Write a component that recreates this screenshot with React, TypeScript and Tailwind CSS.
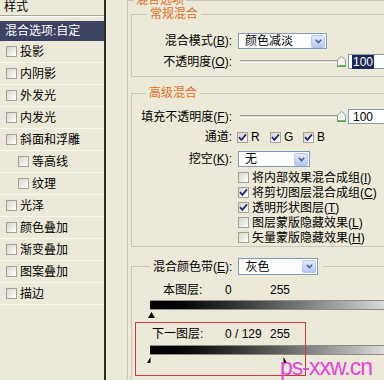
import type { ReactNode } from 'react';

const effects = [
  { name: '投影' },
  { name: '内阴影' },
  { name: '外发光' },
  { name: '内发光' },
  { name: '斜面和浮雕' },
  { name: '等高线', sub: true },
  { name: '纹理', sub: true },
  { name: '光泽' },
  { name: '颜色叠加' },
  { name: '渐变叠加' },
  { name: '图案叠加' },
  { name: '描边' },
];

const options = [
  { label: '将内部效果混合成组', key: 'I', checked: false },
  { label: '将剪切图层混合成组', key: 'C', checked: true },
  { label: '透明形状图层', key: 'T', checked: true },
  { label: '图层蒙版隐藏效果', key: 'L', checked: false },
  { label: '矢量蒙版隐藏效果', key: 'H', checked: false },
];

function Box({ checked = false }: { checked?: boolean }) {
  return (
    <span className="flex h-[11px] w-[11px] shrink-0 items-center justify-center border border-[#a3a199] bg-linear-to-br from-[#d6d5cc] to-white">
      {checked && (
        <svg width="9" height="9" viewBox="0 0 9 9">
          <path d="M1 4.2 3.4 6.8 8 1.4" fill="none" stroke="#1f2d78" strokeWidth="1.8" />
        </svg>
      )}
    </span>
  );
}

function Drop() {
  return (
    <span className="flex h-[13px] w-[14px] items-center justify-center rounded-[2px] border border-[#b6c8ee] bg-linear-to-b from-[#e3ebfd] to-[#b4c8f3]">
      <svg width="7" height="5" viewBox="0 0 7 5">
        <path d="M0.8 0.8 3.5 3.6 6.2 0.8" fill="none" stroke="#4d6185" strokeWidth="1.6" />
      </svg>
    </span>
  );
}

function Select({ value, className }: { value: string; className: string }) {
  return (
    <div className={`flex items-center justify-between border border-[#7f9db9] bg-white pl-[6px] pr-px ${className}`}>
      <span>{value}</span>
      <Drop />
    </div>
  );
}

function Key({ k }: { k: string }) {
  return (
    <>
      (<u>{k}</u>)
    </>
  );
}

function Slider() {
  return (
    <div className="ml-[8px] flex w-[106px] items-center">
      <div className="h-[3px] flex-1 border-y border-t-[#a5a297] border-b-white bg-[#d8d5c8]" />
      <svg width="9" height="11" viewBox="0 0 9 11" className="-ml-px">
        <path d="M0.5 4 4.5 0.5 8.5 4 8.5 10.5 0.5 10.5Z" fill="#f4f4f0" stroke="#8d9a8a" />
        <path d="M0.5 10 8.5 10" stroke="#3aa63a" strokeWidth="1.5" />
      </svg>
    </div>
  );
}

function Row({ label, children }: { label: ReactNode; children: ReactNode }) {
  return (
    <div className="flex items-center">
      <span className="w-[100px] shrink-0 text-right">{label}</span>
      {children}
    </div>
  );
}

function Thumb({ half }: { half?: 'left' | 'right' }) {
  const d = half === 'left' ? 'M3.5 0 3.5 6 0 6Z' : half === 'right' ? 'M3.5 0 7 6 3.5 6Z' : 'M3.5 0 7 6 0 6Z';
  return (
    <svg width="7" height="6" viewBox="0 0 7 6">
      <path d={d} fill="#000" />
    </svg>
  );
}

export default function App() {
  return (
    <div className="relative flex h-[380px] w-[384px] overflow-hidden bg-[#ece9d8] font-['Liberation_Sans','Noto_Sans_CJK_SC',sans-serif] text-[12px] leading-[14px] text-black">
      {/* styles list */}
      <div className="h-full w-[106px] shrink-0 border-r-2 border-[#2a2a2a]">
        <div className="h-[15px] pl-[4px]">样式</div>
        <div className="h-[2px] border-y border-t-[#aca899] border-b-white" />
        <div className="mt-[4px] h-[20px] bg-[#3b4262] pl-[5px] leading-[20px] text-white">混合选项:自定</div>
        {effects.map((e) => (
          <div
            key={e.name}
            className={`flex h-[22px] items-center gap-[3px] border-b border-[#f8f7f1] ${e.sub ? 'pl-[18px]' : 'pl-[6px]'}`}
          >
            <Box />
            <span>{e.name}</span>
          </div>
        ))}
      </div>

      {/* blending options */}
      <div className="-mt-[7px] ml-[21px] w-[293px] shrink-0">
        <fieldset className="border border-[#c9c6b7] pr-[3px]">
          <legend className="ml-[6px] px-[2px] text-[#e0701f]">混合选项</legend>

          <fieldset className="ml-[3px] border border-[#c9c6b7]">
            <legend className="ml-[15px] px-[3px] text-[#e0701f]">常规混合</legend>
            <div className="flex flex-col gap-[5px] pt-[12px] pb-[7px]">
              <Row label={<>混合模式<Key k="B" />:</>}>
                <Select value="颜色减淡" className="ml-[6px] h-[16px] w-[89px]" />
              </Row>
              <Row label={<>不透明度<Key k="O" />:</>}>
                <Slider />
                <div className="ml-[2px] flex h-[15px] w-[50px] items-center border border-[#7f9db9] bg-white pl-[3px]">
                  <span className="bg-[#1c2756] px-px text-white">100</span>
                </div>
              </Row>
            </div>
          </fieldset>

          <fieldset className="mt-[9px] ml-[3px] border border-[#c9c6b7]">
            <legend className="ml-[14px] px-[3px] text-[#e0701f]">高级混合</legend>
            <div className="flex flex-col pt-[9px] pb-px">
              <Row label={<>填充不透明度<Key k="F" />:</>}>
                <Slider />
                <div className="ml-[2px] flex h-[15px] w-[50px] items-center border border-[#7f9db9] bg-white pl-[4px]">
                  100
                </div>
              </Row>
              <div className="mt-[6px]">
                <Row label="通道:">
                  <div className="ml-[5px] flex items-center">
                    {['R', 'G', 'B'].map((c) => (
                      <div key={c} className="flex w-[33px] items-center gap-[3px]">
                        <Box checked />
                        <span>{c}</span>
                      </div>
                    ))}
                  </div>
                </Row>
              </div>
              <div className="mt-[7px]">
                <Row label={<>挖空<Key k="K" />:</>}>
                  <Select value="无" className="ml-[6px] h-[16px] w-[72px]" />
                </Row>
              </div>
              <div className="mt-[3px] flex flex-col pl-[106px]">
                {options.map((o) => (
                  <div key={o.key} className="flex h-[15px] items-center gap-[3px]">
                    <Box checked={o.checked} />
                    <span>
                      {o.label}
                      <Key k={o.key} />
                    </span>
                  </div>
                ))}
              </div>
            </div>
          </fieldset>

          <fieldset className="mt-[11px] ml-[3px] border border-[#c9c6b7] pb-[20px]">
            <legend className="ml-[18px] flex items-center px-[3px]">
              <span>混合颜色带<Key k="E" />:</span>
              <Select value="灰色" className="ml-[6px] h-[17px] w-[80px]" />
              <span className="w-[2px]" />
            </legend>
            <div className="pt-[8px]">
              <div className="flex h-[14px] items-center">
                <span className="w-[93px] pl-[31px]">本图层:</span>
                <span className="w-[45px]">0</span>
                <span>255</span>
              </div>
              <div className="mt-[3px] ml-[18px] h-[10px] w-[263px] border-y border-[#8e8c84] bg-linear-to-r from-black to-white" />
              <div className="mt-[2px] flex h-[6px] pl-[16px]">
                <Thumb />
              </div>
              <div className="mt-[9px] flex h-[14px] items-center">
                <span className="w-[93px] pl-[20px]">下一图层:</span>
                <span className="w-[45px]">0 / 129</span>
                <span>255</span>
              </div>
              <div className="mt-[4px] ml-[18px] h-[10px] w-[263px] border-y border-[#8e8c84] bg-linear-to-r from-black to-white" />
              <div className="mt-[2px] flex h-[6px] pl-[15px]">
                <Thumb half="left" />
                <span className="w-[126px]" />
                <Thumb half="right" />
              </div>
            </div>
          </fieldset>
        </fieldset>
      </div>

      {/* annotation overlays */}
      <div className="absolute top-[322px] left-[135px] h-[54px] w-[171px] border border-[#cc3a3a]" />
      <div className="absolute top-[356px] left-[280px] font-['Liberation_Sans',sans-serif] text-[23px] leading-[22px] tracking-[-1px] text-[#e245dc]">
        ps-xxw.cn
      </div>
    </div>
  );
}
